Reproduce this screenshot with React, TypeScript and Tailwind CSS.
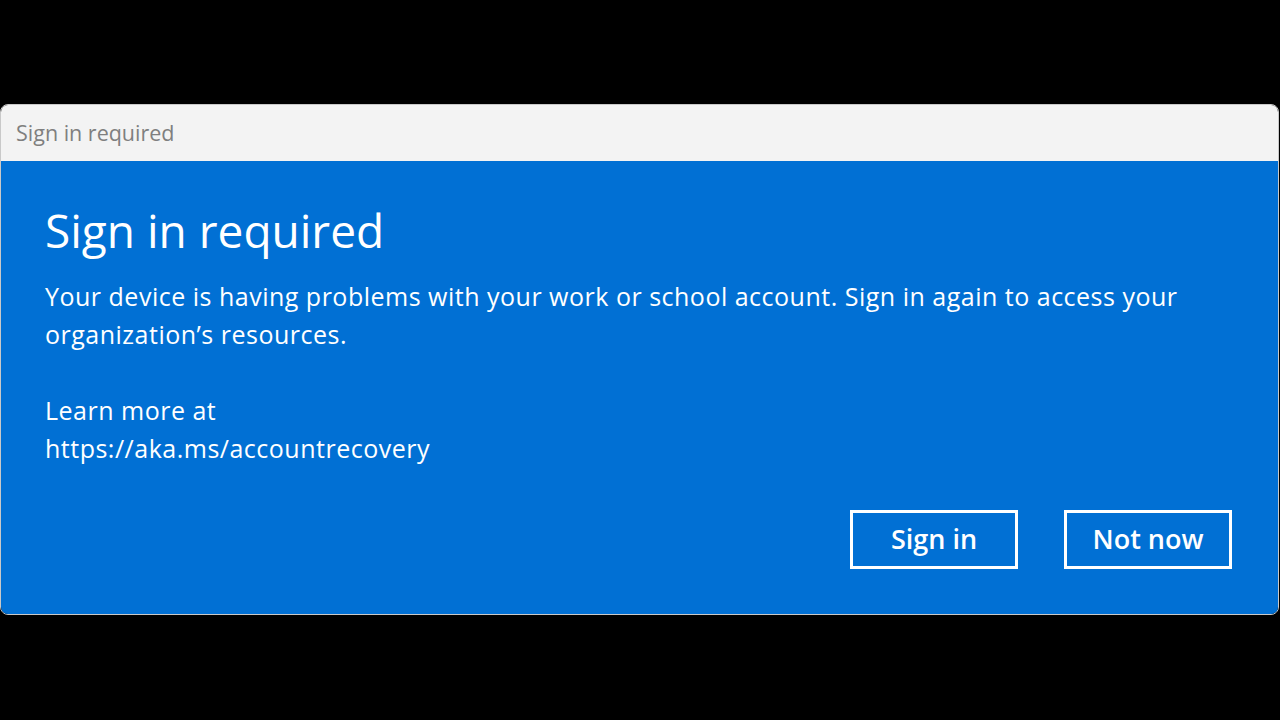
export default function App() {
  const font = { fontFamily: '"Open Sans", "Noto Sans", sans-serif' };
  return (
    <div className="h-[720px] w-[1280px] overflow-hidden bg-black pt-[104px]" style={font}>
      <div className="flex h-[511px] w-[1279px] flex-col overflow-hidden rounded-[8px] border border-[#c9c9c9]">
        <div className="flex h-[56px] shrink-0 items-center bg-[#f3f3f3] pl-[15px] text-[21.5px] text-[#7f7f7f]">
          Sign in required
        </div>
        <div className="flex flex-1 flex-col bg-[#0170d4] px-[44px] text-white">
          <h1 className="mt-[41px] text-[46px] leading-[56px] font-normal">Sign in required</h1>
          <p className="mt-[19px] text-[25px] leading-[38px] tracking-[0.5px]">
            Your device is having problems with your work or school account. Sign in again to access your
            <br />
            organization’s resources.
          </p>
          <p className="mt-[38px] text-[25px] leading-[38px] tracking-[0.5px]">
            Learn more at
            <br />
            https://aka.ms/accountrecovery
          </p>
          <div className="mt-[43px] flex justify-end gap-[46px] pr-[2px]">
            <button className="h-[59px] w-[168px] border-[3px] border-white text-[27px] font-semibold text-white">
              Sign in
            </button>
            <button className="h-[59px] w-[168px] border-[3px] border-white text-[27px] font-semibold text-white">
              Not now
            </button>
          </div>
        </div>
      </div>
    </div>
  );
}
